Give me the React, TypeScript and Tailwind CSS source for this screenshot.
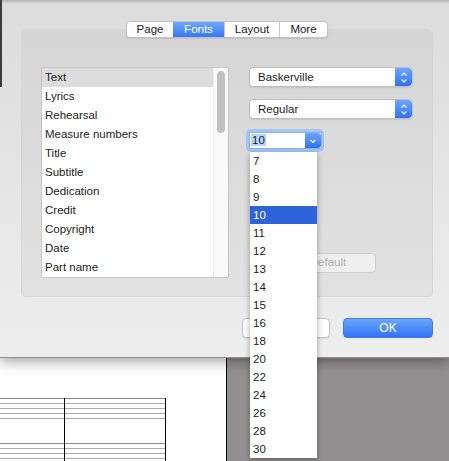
import React from "react";

const styleNames = [
  "Text",
  "Lyrics",
  "Rehearsal",
  "Measure numbers",
  "Title",
  "Subtitle",
  "Dedication",
  "Credit",
  "Copyright",
  "Date",
  "Part name",
];

const sizes = [7, 8, 9, 10, 11, 12, 13, 14, 15, 16, 18, 20, 22, 24, 26, 28, 30];

const tabs = [
  { label: "Page", w: "w-[46px]" },
  { label: "Fonts", w: "w-[51px]" },
  { label: "Layout", w: "w-[55px]" },
  { label: "More", w: "w-[48px]" },
];

const Stepper = () => (
  <div className="flex h-full w-[17px] items-center justify-center rounded-r-[4px] bg-linear-to-b from-[#6da6fb] to-[#2f6ff3]">
    <svg width="8" height="13" viewBox="0 0 8 13" fill="none" stroke="white" strokeWidth="1.2">
      <path d="M1.5 4.6 L4 2.1 L6.5 4.6" />
      <path d="M1.5 8.4 L4 10.9 L6.5 8.4" />
    </svg>
  </div>
);

const Popup = ({ value }: { value: string }) => (
  <div className="flex h-[20px] w-[164px] overflow-hidden rounded-[4px] border border-[#bdbdbd] bg-white shadow-[0_1px_1px_rgba(0,0,0,0.08)]">
    <div className="flex-1 pl-[8px] leading-[18px]">{value}</div>
    <Stepper />
  </div>
);

const Staff = () => (
  <div className="flex flex-col">
    <div className="h-[5px] border-t border-[#8c8c8c]" />
    <div className="h-[5px] border-t border-[#ababab]" />
    <div className="h-[5px] border-t border-[#ababab]" />
    <div className="h-[5px] border-t border-[#ababab]" />
    <div className="h-px bg-[#ababab]" />
  </div>
);

const Measure = ({ w }: { w: string }) => (
  <div className={`${w} flex flex-col gap-[24px] border-r border-black`}>
    <Staff />
    <Staff />
  </div>
);

export default function App() {
  return (
    <div className="relative h-[461px] w-[449px] overflow-hidden bg-[#929090] font-['Liberation_Sans',Arial,sans-serif] text-[11.5px] text-[#1c1c1c]">
      {/* sheet */}
      <div className="relative z-10 h-[358px] border-b border-[#8e8e8e] bg-linear-to-b from-[#dcdcdc] to-[#eeeeee] pl-[21px] pt-[21px] shadow-[0_4px_12px_rgba(0,0,0,0.35)]">
        <div className="pointer-events-none absolute inset-x-0 top-0 h-[4px] bg-linear-to-b from-[#b5b5b5] to-transparent" />
        <div className="absolute left-0 top-0 h-[87px] w-[2px] bg-[#3c3c3c]" />

        <div className="relative z-10 flex w-[412px] justify-center">
          <div className="flex h-[17px] overflow-hidden rounded-[4px] border border-[#c2c2c2] bg-white shadow-[0_1px_1px_rgba(0,0,0,0.1)]">
            {tabs.map((t, i) => (
              <div
                key={t.label}
                className={`${t.w} flex items-center justify-center leading-none ${
                  t.label === "Fonts"
                    ? "bg-linear-to-b from-[#6ca6fb] to-[#3677f6] text-white"
                    : "text-[#1c1c1c]"
                } ${i > 1 ? "border-l border-[#c8c8c8]" : ""}`}
              >
                {t.label}
              </div>
            ))}
          </div>
        </div>

        <div className="-mt-[9px] h-[268px] w-[412px] rounded-[5px] border border-[#d6d6d6] bg-black/[0.035] pl-[19px] pt-[37px]">
          <div className="flex">
            <div className="flex h-[211px] w-[188px] border border-[#c6c6c6] bg-white">
              <div className="flex-1">
                {styleNames.map((s, i) => (
                  <div
                    key={s}
                    className={`h-[19px] pl-[3px] leading-[19px] ${i === 0 ? "bg-[#dcdcdc]" : ""}`}
                  >
                    {s}
                  </div>
                ))}
              </div>
              <div className="w-[15px] border-l border-[#ececec] bg-[#fafafa] pl-[3px] pt-[3px]">
                <div className="h-[62px] w-[8px] rounded-full bg-[#c1c1c1]" />
              </div>
            </div>

            <div className="ml-[20px] flex flex-col">
              <Popup value="Baskerville" />
              <div className="mt-[12px]">
                <Popup value="Regular" />
              </div>
              <div className="-ml-[3px] mt-[10px] w-[78px] rounded-[5px] bg-[#a3c4f5] p-[3px] pr-[2px]">
                <div className="flex h-[17px] border border-[#8fb0e8] bg-white">
                  <div className="flex-1 pl-[1px] leading-[15px]">
                    <span className="bg-[#b3d6ff] px-[1px]">10</span>
                  </div>
                  <div className="flex w-[16px] items-center justify-center rounded-r-[3px] bg-linear-to-b from-[#6da6fb] to-[#2f6ff3]">
                    <svg width="8" height="6" viewBox="0 0 8 6" fill="none" stroke="white" strokeWidth="1.2">
                      <path d="M1.5 1.8 L4 4.3 L6.5 1.8" />
                    </svg>
                  </div>
                </div>
              </div>
              <div className="ml-[31px] mt-[101px] flex h-[20px] w-[96px] items-center justify-center rounded-[4px] border border-[#cdcdcd] bg-[#efefef] text-[#b3b3b3]">
                Default
              </div>
            </div>
          </div>
        </div>

        <div className="mt-[21px] flex w-[412px] justify-end gap-[13px]">
          <div className="flex h-[20px] w-[88px] items-center justify-center rounded-[4px] border border-[#c4c4c4] bg-white shadow-[0_1px_1px_rgba(0,0,0,0.08)]">
            Cancel
          </div>
          <div className="flex h-[20px] w-[90px] items-center justify-center rounded-[4px] border border-[#3f7af0] bg-linear-to-b from-[#6ba6fb] to-[#3272f5] text-[12px] text-white">
            OK
          </div>
        </div>
      </div>

      {/* score behind the sheet */}
      <div className="flex h-[103px]">
        <div className="w-[226px] bg-white pt-[40px]">
          <div className="flex">
            <Measure w="w-[65px]" />
            <Measure w="w-[101px]" />
          </div>
        </div>
        <div className="w-px bg-black" />
        <div className="flex-1" />
      </div>

      {/* open size menu */}
      <div className="absolute left-[250px] top-[152px] z-20 w-[67px] bg-white shadow-[0_2px_6px_rgba(0,0,0,0.35)]">
        {sizes.map((n) => (
          <div
            key={n}
            className={`h-[18px] pl-[3px] leading-[18px] ${n === 10 ? "bg-[#2f63d9] text-white" : ""}`}
          >
            {n}
          </div>
        ))}
      </div>
    </div>
  );
}
